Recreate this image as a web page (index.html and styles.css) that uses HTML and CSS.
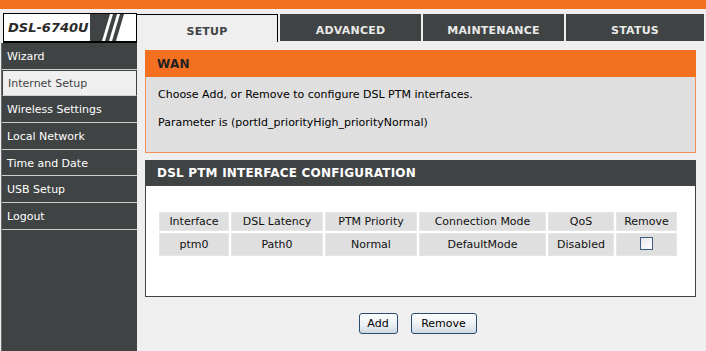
FILE: index.html
```html
<!DOCTYPE html>
<html>
<head>
<meta charset="utf-8">
<link rel="stylesheet" href="styles.css">
</head>
<body>
<div class="topbar"></div>
<div class="frame">
  <div class="logo">
    <span class="logo-text">DSL-6740U</span>
    <svg class="logo-stripes" width="36" height="27" viewBox="0 0 36 27">
      <polygon points="0,0 20,0 12,27 0,27" fill="#404343"/>
      <polygon points="23,0 27,0 19,27 15,27" fill="#404343"/>
      <polygon points="30,0 34,0 26,27 22,27" fill="#404343"/>
    </svg>
  </div>
  <nav class="tabs">
    <div class="tab active">SETUP</div>
    <div class="tab">ADVANCED</div>
    <div class="tab">MAINTENANCE</div>
    <div class="tab">STATUS</div>
  </nav>
  <aside class="sidebar">
    <div class="nav-item">Wizard</div>
    <div class="nav-item selected">Internet Setup</div>
    <div class="nav-item">Wireless Settings</div>
    <div class="nav-item">Local Network</div>
    <div class="nav-item">Time and Date</div>
    <div class="nav-item">USB Setup</div>
    <div class="nav-item">Logout</div>
  </aside>
  <main class="main">
    <section class="box wan">
      <h2 class="box-head orange">WAN</h2>
      <div class="box-body grey">
        <p>Choose Add, or Remove to configure DSL PTM interfaces.</p>
        <p>Parameter is (portId_priorityHigh_priorityNormal)</p>
      </div>
    </section>
    <section class="box cfg">
      <h2 class="box-head dark">DSL PTM INTERFACE CONFIGURATION</h2>
      <div class="box-body white">
        <table class="grid">
          <tr class="hdr">
            <td class="c1">Interface</td>
            <td class="c2">DSL Latency</td>
            <td class="c3">PTM Priority</td>
            <td class="c4">Connection Mode</td>
            <td class="c5">QoS</td>
            <td class="c6">Remove</td>
          </tr>
          <tr class="row">
            <td>ptm0</td>
            <td>Path0</td>
            <td>Normal</td>
            <td>DefaultMode</td>
            <td>Disabled</td>
            <td><span class="check"></span></td>
          </tr>
        </table>
      </div>
    </section>
    <div class="actions">
      <button class="btn add">Add</button>
      <button class="btn remove">Remove</button>
    </div>
  </main>
</div>
</body>
</html>
```

FILE: styles.css
```css
html, body {
  margin: 0;
  padding: 0;
  height: 100%;
}
body {
  background: #efefef;
  font-family: Tahoma, "DejaVu Sans", sans-serif;
  font-size: 11px;
  color: #000;
  overflow: hidden;
}
.topbar {
  height: 9px;
  background: #f37021;
}
.frame {
  display: grid;
  grid-template-columns: 137px 1fr;
  grid-template-rows: 30px 1fr;
  margin-top: 4px;
  height: calc(100% - 13px);
}
.logo {
  margin-left: 3px;
  border: 1px solid #000;
  border-bottom-width: 2px;
  background: #fff;
  display: flex;
  align-items: center;
  overflow: hidden;
  box-sizing: border-box;
  white-space: nowrap;
}
.logo-text {
  font-family: "DejaVu Sans", sans-serif;
  font-weight: bold;
  font-style: italic;
  font-size: 13px;
  color: #2a2a2a;
  margin-left: 4px;
  flex: none;
}
.logo-stripes {
  margin-left: 1px;
  flex: none;
}
.tabs {
  display: flex;
  gap: 2px;
  padding-top: 1px;
  height: 27px;
}
.tab {
  width: 141px;
  flex: none;
  background: #404343;
  color: #e8e8e8;
  font-family: "DejaVu Sans", sans-serif;
  font-weight: bold;
  font-size: 11px;
  letter-spacing: 0.2px;
  display: flex;
  align-items: center;
  justify-content: center;
  box-sizing: border-box;
  padding-top: 5px;
}
.tab:last-child {
  width: 138px;
}
.tab.active {
  background: #efefef;
  color: #404343;
  border-top: 1px solid #000;
  border-right: 1px solid #000;
  height: 28px;
}
.sidebar {
  background: #404343;
  border-left: 1px solid #6a6d6d;
  margin-left: 1px;
  padding-left: 1px;
}
.nav-item {
  height: 25.67px;
  line-height: 27px;
  border-bottom: 1px solid #cfcfcf;
  color: #fff;
  padding-left: 5px;
  font-size: 11px;
  margin-left: -1px;
  box-sizing: content-box;
}
.nav-item.selected {
  background: #efefef;
  color: #404343;
  border: 1px solid #404343;
  height: 24.67px;
  line-height: 26px;
  border-bottom: 1px solid #cfcfcf;
}
.main {
  padding: 7px 10px 0 8px;
}
.box {
  margin: 0 0 7px 0;
}
.box-head {
  margin: 0;
  height: 27px;
  line-height: 28px;
  padding-left: 12px;
  font-family: "DejaVu Sans", sans-serif;
  font-size: 12px;
  font-weight: bold;
  letter-spacing: 0.2px;
}
.box-head.orange {
  background: #f37021;
  color: #222;
}
.box-head.dark {
  background: #404343;
  color: #fff;
  height: 26px;
  line-height: 27px;
}
.box-body p {
  margin: 0;
}
.box-body.grey {
  background: #dfdfdf;
  border: 1px solid #f3905a;
  border-top: none;
  height: 76px;
  padding: 9px 0 0 12px;
  box-sizing: border-box;
}
.box-body.grey p {
  line-height: 18px;
  margin-bottom: 10px;
}
.box-body.white {
  background: #fff;
  border: 1px solid #404343;
  border-top: none;
  height: 111px;
  box-sizing: border-box;
  padding: 24px 0 0 12px;
}
.grid {
  border-collapse: separate;
  border-spacing: 2px;
  margin-left: -1px;
}
.grid td {
  background: #dfdfdf;
  border: 1px solid #e6e6e6;
  text-align: center;
  padding: 0;
  color: #111;
}
.hdr td {
  height: 17px;
}
.row td {
  height: 21px;
}
.c1 { width: 68px; }
.c2 { width: 90px; }
.c3 { width: 90px; }
.c4 { width: 125px; }
.c5 { width: 64px; }
.c6 { width: 59px; }
.check {
  display: inline-block;
  width: 11px;
  height: 11px;
  border: 1px solid #3b5d83;
  background: linear-gradient(135deg, #e6e6e6, #fff);
  vertical-align: middle;
  margin-top: -3px;
}
.actions {
  display: flex;
  justify-content: center;
  gap: 13px;
  padding-top: 9px;
  padding-right: 6px;
}
.btn {
  font-family: Tahoma, "DejaVu Sans", sans-serif;
  font-size: 11px;
  height: 21px;
  padding: 0;
  border: 1px solid #2c4b6e;
  border-radius: 3px;
  background: linear-gradient(#ffffff, #eaeef3 60%, #cdd6e1);
  color: #000;
}
.btn.add { width: 39px; }
.btn.remove { width: 66px; }
```
